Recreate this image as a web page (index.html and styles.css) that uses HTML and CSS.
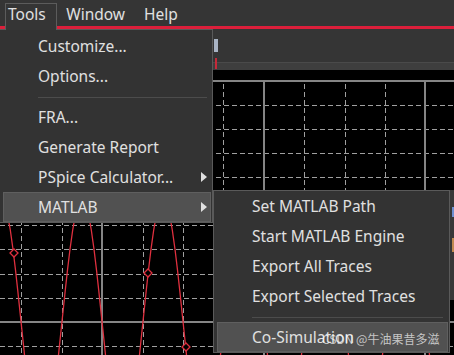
FILE: index.html
```html
<!DOCTYPE html>
<html lang="en">

<head>
	<meta charset="UTF-8">
	<meta name="viewport" content="width=device-width, initial-scale=1.0">
	<title>PSpice Probe - Tools menu</title>
	<link rel="stylesheet" href="styles.css">
</head>

<body>
	<div class="app">
		<div class="menubar">
			<div class="menu-title open">Tools</div>
			<div class="menu-title">Window</div>
			<div class="menu-title">Help</div>
		</div>

		<div class="workspace">
			<div class="toolbar">
				<div class="tool-icon"></div>
			</div>
			<div class="band"></div>
			<!-- waveform window, coordinates are page pixels -->
			<svg class="plot" viewBox="0 70 454 285" xmlns="http://www.w3.org/2000/svg">
				<defs>
					<path id="arch" d="M-24 360 L-23 350 L-20.9 330 L-18.8 310 L-16.7 290 L-14.5 270 L-12.1 250 L-9.3 230 L-6.6 215 L-4 205 L0 199 L4 205 L6.6 215 L9.3 230 L12.1 250 L14.5 270 L16.7 290 L18.8 310 L20.9 330 L23 350 L24 360" />
				</defs>
				<g stroke="#a0a0a0" stroke-width="1" stroke-dasharray="5 3" shape-rendering="crispEdges">
					<path d="M0 105.5H454M0 129.5H454M0 153.5H454M0 177.5H454M0 201.5H454M0 225.5H454M0 249.5H454M0 274.5H454M0 298.5H454M0 346.5H454" />
					<path d="M21.5 84V355M62.5 84V355M143.5 84V355M183.5 84V355M223.5 84V355M304.5 84V355M345.5 84V355M385.5 84V355" />
				</g>
				<g stroke="#858585" stroke-width="2" shape-rendering="crispEdges">
					<path d="M0 81H454M0 322H454" />
					<path d="M102 81V355M264 81V355M425 81V355" />
				</g>
				<g fill="none" stroke="#e0303f" stroke-width="1.3">
					<use href="#arch" x="1" />
					<use href="#arch" x="82" />
					<use href="#arch" x="163" />
					<use href="#arch" x="244" />
					<use href="#arch" x="325" />
					<use href="#arch" x="406" />
					<polygon points="14,249 18,253 14,257 10,253" fill="#000" />
					<polygon points="148,269 152,273 148,277 144,273" fill="#000" />
					<polygon points="186,343 190,347 186,351 182,347" fill="#000" />
				</g>
				<rect x="450" y="190" width="4" height="110" fill="#383838" />
				<rect x="452" y="207" width="2" height="10" fill="#6d8fd0" />
				<rect x="452" y="238" width="2" height="14" fill="#c08a50" />
			</svg>
		</div>

		<ul class="menu menu-tools">
			<li class="item">Customize...</li>
			<li class="item">Options...</li>
			<li class="sep"></li>
			<li class="item">FRA...</li>
			<li class="item">Generate Report</li>
			<li class="item">PSpice Calculator...<span class="arrow"></span></li>
			<li class="item active">MATLAB<span class="arrow"></span></li>
		</ul>

		<ul class="menu menu-matlab">
			<li class="item">Set MATLAB Path</li>
			<li class="item">Start MATLAB Engine</li>
			<li class="item">Export All Traces</li>
			<li class="item">Export Selected Traces</li>
			<li class="sep"></li>
			<li class="item active">Co-Simulation</li>
		</ul>

		<div class="watermark">CSDN @牛油果昔多滋</div>
	</div>
</body>

</html>
```

FILE: styles.css
```css
* {
	margin: 0;
	padding: 0;
	box-sizing: border-box;
}

body {
	background-color: #353535;
	color: #e0e0e0;
	font-family: "Noto Sans", "Noto Sans CJK SC", sans-serif;
	font-size: 15.5px;
}

.app {
	position: relative;
	width: 454px;
	height: 355px;
	overflow: hidden;
}

/* menu bar with the red accent line under it */
.menubar {
	display: flex;
	height: 29px;
	padding-left: 5px;
	background: linear-gradient(to bottom, #353535 26px, #dc1f3b 26px);
}

.menu-title {
	height: 27px;
	margin-top: 3px;
	padding: 0 8.5px;
	border: 1px solid transparent;
	border-bottom: 0;
	line-height: 21px;
}

.menu-title.open {
	position: relative;
	z-index: 3;
	padding: 0 10px 0 2px;
	border-color: #5c5c5c;
	background-color: #353535;
}

.toolbar {
	display: flex;
	height: 33px;
	padding-left: 214px;
}

.tool-icon {
	width: 4px;
	height: 13px;
	margin-top: 10px;
	background-color: #a9b4c4;
	box-shadow: 0 18px 0 -1px #c62a3a;
}

.band {
	height: 8px;
	background-color: #3e3e3e;
	border-top: 1px solid #4a4a4a;
}

.plot {
	display: block;
	width: 454px;
	height: 285px;
	background-color: #000;
}

/* dropdowns */
.menu {
	position: absolute;
	z-index: 2;
	list-style: none;
	background-color: #333;
	border: 1px solid #5a5a5a;
}

.menu-tools {
	left: -1px;
	top: 29px;
	width: 214px;
	padding-top: 1px;
}

.menu-matlab {
	left: 213px;
	top: 190px;
	width: 237px;
}

.item {
	display: flex;
	align-items: center;
	justify-content: space-between;
	height: 30px;
	margin: 0 1px 0 3px;
	padding: 0 3px 0 34px;
	border: 1px solid transparent;
	line-height: 28px;
	white-space: nowrap;
}

.item.active {
	background-color: #515151;
	border-color: #5f5f5f;
}

.arrow {
	width: 0;
	height: 0;
	border-left: 6px solid #e0e0e0;
	border-top: 5px solid transparent;
	border-bottom: 5px solid transparent;
}

.sep {
	height: 1px;
	margin: 6px 5px 4px 38px;
	background-color: #4c4c4c;
}

.menu-matlab .sep {
	margin-right: 6px;
}

.watermark {
	position: absolute;
	z-index: 4;
	left: 322px;
	top: 330px;
	color: rgba(255, 255, 255, 0.68);
	font-family: "Noto Sans CJK SC", sans-serif;
	font-size: 12px;
	line-height: 18px;
}
```
